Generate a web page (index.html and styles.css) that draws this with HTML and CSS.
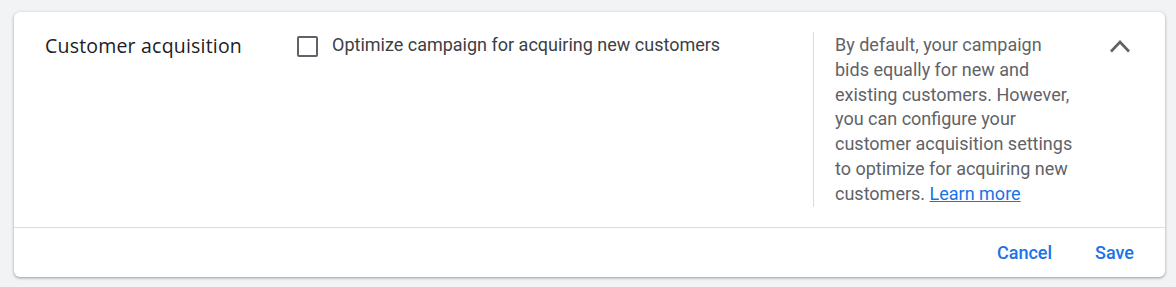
FILE: index.html
```html
<!DOCTYPE html>
<html lang="en">
<head>
<meta charset="utf-8">
<title>Customer acquisition</title>
<link rel="stylesheet" href="styles.css">
</head>
<body>
<div class="card">
  <div class="row">
    <div class="title">Customer acquisition</div>
    <div class="option">
      <span class="checkbox"></span>
      <span class="label">Optimize campaign for acquiring new customers</span>
    </div>
    <div class="desc">By default, your campaign bids equally for new and existing customers. However, you can configure your customer acquisition settings to optimize for acquiring new customers. <a class="link" href="#">Learn more</a></div>
    <div class="toggle">
      <svg width="24" height="16" viewBox="0 0 24 16" aria-hidden="true"><polyline points="3,13.5 12,4 21,13.5" fill="none" stroke="#5f6368" stroke-width="2.6"/></svg>
    </div>
  </div>
  <div class="footer">
    <span class="btn">Cancel</span>
    <span class="btn">Save</span>
  </div>
</div>
</body>
</html>
```
FILE: styles.css
```css
html, body {
  margin: 0;
  padding: 0;
  background: #f1f3f4;
}
body {
  padding: 12px 11px 10px 14px;
  font-family: Roboto, "Liberation Sans", Arial, sans-serif;
}
.card {
  background: #fff;
  border-radius: 6px;
  box-shadow: 0 1px 2px rgba(60,64,67,0.3), 0 1px 3px 1px rgba(60,64,67,0.15);
}
.row {
  display: flex;
  align-items: flex-start;
  padding: 20px 0 20px 31px;
  border-bottom: 1px solid #dadce0;
}
.title {
  width: 252px;
  flex: none;
  font-family: "Open Sans", Roboto, sans-serif;
  font-size: 19.5px;
  line-height: 28px;
  color: #202124;
  font-weight: 500;
  letter-spacing: 0.2px;
}
.option {
  width: 516px;
  flex: none;
  display: flex;
  align-items: flex-start;
  gap: 14px;
}
.checkbox {
  width: 17px;
  height: 17px;
  border: 2px solid #5f6368;
  border-radius: 2px;
  margin-top: 4px;
  flex: none;
}
.label {
  font-size: 18px;
  line-height: 26px;
  color: #3c4043;
}
.desc {
  border-left: 1px solid #dadce0;
  padding-left: 21px;
  width: 242px;
  flex: none;
  font-size: 18px;
  line-height: 24.8px;
  color: #5f6368;
  padding-top: 1px;
  padding-bottom: 0;
}
.link {
  color: #1a73e8;
  text-decoration: underline;
}
.toggle {
  margin-left: 31px;
  padding-top: 6px;
  width: 24px;
  flex: none;
}
.toggle svg { display: block; }
.footer {
  display: flex;
  justify-content: flex-end;
  align-items: center;
  gap: 43px;
  height: 49px;
  padding-right: 31px;
}
.btn {
  font-size: 18px;
  font-weight: 500;
  color: #1a73e8;
}
```
